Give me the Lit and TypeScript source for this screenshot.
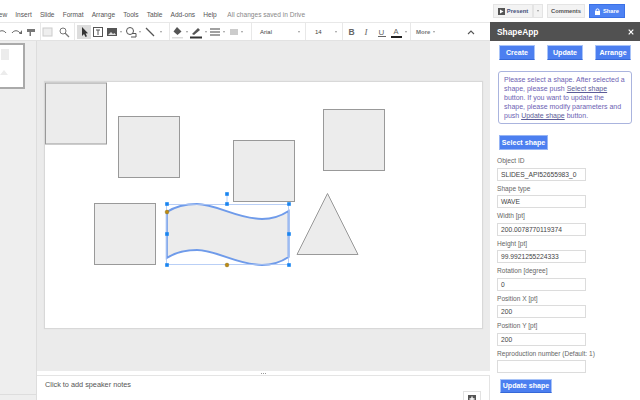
import { LitElement, css, html, svg } from 'lit'
import { customElement } from 'lit/decorators.js'

const menus = ['View', 'Insert', 'Slide', 'Format', 'Arrange', 'Tools', 'Table', 'Add-ons', 'Help']

const fields = [
  ['Object ID', 'SLIDES_API52655983_0'],
  ['Shape type', 'WAVE'],
  ['Width [pt]', '200.0078770119374'],
  ['Height [pt]', '99.9921255224333'],
  ['Rotation [degree]', '0'],
  ['Position X [pt]', '200'],
  ['Position Y [pt]', '200'],
  ['Reproduction number (Default: 1)', ''],
]

const squares = [
  [45.5, 83, 61, 61],
  [118.5, 116.5, 61, 61],
  [233.5, 140.5, 61, 61],
  [323.5, 109.5, 61, 61],
  [94.5, 203.5, 61, 61],
]

const handles = [
  [167, 204], [227, 204], [289, 204],
  [167, 234], [289, 234],
  [167, 265], [289, 265],
]

const ic = (w: number, body: unknown) =>
  html`<svg class="ic" width=${w} height="14" viewBox="0 0 ${w} 14">${body}</svg>`

const caret = html`<i class="caret"></i>`
const sp = (w: number) => html`<span class="sp" style="width:${w}px"></span>`

@customElement('app-root')
export class AppRoot extends LitElement {
  static styles = css`
    :host {
      display: block;
      width: 640px;
      height: 400px;
      overflow: hidden;
      font-family: "Liberation Sans", Arial, sans-serif;
      font-size: 7.5px;
      color: #444;
      background: #fff;
    }

    /* Menu */
    .top {
      height: 22px;
      display: flex;
      align-items: center;
    }
    .menu {
      display: flex;
      gap: 8.1px;
      margin-left: -7px;
      padding-top: 6px;
      font-size: 6.6px;
      color: #555;
    }
    .saved {
      margin-left: 2.5px;
      color: #888;
    }
    .actions {
      margin-left: auto;
      margin-right: 15px;
      display: flex;
      gap: 4px;
    }
    .gbtn {
      height: 14px;
      box-sizing: border-box;
      display: flex;
      align-items: center;
      justify-content: center;
      background: #f3f3f3;
      border: 1px solid #e4e4e4;
      font-size: 5.8px;
      font-weight: bold;
      color: #555;
    }
    .present {
      width: 40px;
      gap: 2px;
      color: #44507a;
    }
    .present-caret {
      width: 10px;
      margin-left: -4px;
    }
    .comments {
      width: 38px;
    }
    .share {
      width: 36px;
      gap: 3px;
      background: #4d82f3;
      border-color: #3b71e6;
      color: #fff;
    }

    /* Arbeitsbereich */
    .body {
      height: 378px;
      display: flex;
    }
    .left {
      width: 490px;
      display: flex;
      flex-direction: column;
    }
    .toolbar {
      height: 19px;
      box-sizing: border-box;
      flex: none;
      display: flex;
      align-items: center;
      border-top: 1px solid #e8e8e8;
      border-bottom: 1px solid #e2e2e2;
    }
    .grp {
      height: 100%;
      box-sizing: border-box;
      flex: none;
      display: flex;
      align-items: center;
      border-right: 1px solid #e8e8e8;
      overflow: hidden;
    }
    .ic,
    .sp {
      flex: none;
      display: block;
    }
    .caret {
      flex: none;
      width: 0;
      height: 0;
      border: 1.5px solid transparent;
      border-top: 2px solid #999;
      border-bottom: 0;
    }
    .active {
      flex: none;
      display: flex;
      align-items: center;
      justify-content: center;
      width: 14px;
      height: 14px;
      background: #ddd;
    }
    .work {
      flex: 1;
      display: flex;
      min-height: 0;
    }
    .strip {
      width: 36px;
      flex: none;
      background: #eee;
      border-right: 1px solid #ddd;
      overflow: hidden;
      position: relative;
    }
    .thumb {
      width: 72px;
      height: 46px;
      box-sizing: border-box;
      margin: 2px 0 0 -47px;
      background: #fff;
      border: 2px solid #aaa;
      display: block;
    }
    .strip-line {
      position: absolute;
      left: 0;
      right: 0;
      bottom: 5px;
      border-top: 1px solid #ddd;
    }
    .center {
      flex: 1;
      display: flex;
      flex-direction: column;
      min-width: 0;
    }
    .canvas {
      height: 330px;
      box-sizing: border-box;
      flex: none;
      background: #ebebeb;
      padding: 41px 0 0 8px;
    }
    .slide {
      display: block;
      width: 437px;
      height: 246px;
      background: #fff;
      box-shadow: 0 0 1px 1px #d8d8d8;
    }
    .grip {
      height: 4px;
      box-sizing: content-box;
      flex: none;
      display: flex;
      align-items: center;
      justify-content: center;
      gap: 1px;
      border-bottom: 1px solid #e4e4e4;
    }
    .grip i {
      width: 1px;
      height: 1px;
      background: #999;
    }
    .notes {
      flex: 1;
      display: flex;
      justify-content: space-between;
      padding: 4px 8px 0 8px;
      font-size: 7.3px;
      color: #555;
      border-right: 1px solid #e4e4e4;
    }
    .plus {
      width: 18px;
      height: 14px;
      margin-top: 11px;
      box-sizing: border-box;
      border: 1px solid #e2e2e2;
      border-bottom: 0;
      display: flex;
      align-items: center;
      justify-content: center;
    }

    /* Seitenleiste */
    .side {
      width: 150px;
      flex: none;
      display: flex;
      flex-direction: column;
    }
    .side-head {
      height: 19px;
      box-sizing: border-box;
      flex: none;
      padding: 0 6px 0 7px;
      display: flex;
      align-items: center;
      justify-content: space-between;
      background: #515151;
      color: #fff;
      font-size: 8.4px;
      font-weight: bold;
    }
    .side-body {
      padding: 4px 0 0 7px;
    }
    .btn {
      height: 15px;
      box-sizing: border-box;
      display: flex;
      align-items: center;
      justify-content: center;
      background: #4c7ff0;
      border: 1px solid #a9c4f8;
      border-bottom-color: #3568d8;
      color: #fff;
      font-size: 7.1px;
      font-weight: bold;
    }
    .btn-row {
      display: flex;
      gap: 12px;
      margin: 0 0 11px 2px;
      width: 132px;
    }
    .btn-row .btn {
      width: 36px;
    }
    .info {
      width: 134px;
      height: 53px;
      margin-left: 1px;
      box-sizing: border-box;
      padding: 3px 2px 3px 5px;
      border: 1px solid #aab4de;
      border-radius: 3px;
      color: #6d62b3;
      font-size: 7px;
      line-height: 9px;
      white-space: nowrap;
    }
    .info u {
      color: #5c5c98;
    }
    .select {
      width: 49px;
      margin: 11px 0 3px 2px;
      height: 15px;
      border-color: #97b5f5;
    }
    .field label {
      display: block;
      height: 14.5px;
      line-height: 15px;
      color: #666;
      font-size: 6.6px;
      white-space: nowrap;
    }
    .value {
      width: 89px;
      height: 13px;
      box-sizing: border-box;
      padding: 0 3px;
      border: 1px solid #dcdcdc;
      background: #fff;
      font-size: 6.7px;
      line-height: 11px;
      color: #444;
    }
    .update {
      width: 52px;
      margin: 6px 0 0 3px;
      height: 14px;
    }
  `

  renderShapes() {
    const top = 'M166.8 212 C176 206 186 204 197 204 C216 204 238 219 262 219 C272 219 281 216 288.6 211'
    const bottom = 'L288.6 257 C281 262 272 265 262 265 C238 265 216 250 197 250 C186 250 176 252 166.8 258 Z'
    return svg`
      ${squares.map(
        ([x, y, w, h]) =>
          svg`<rect x=${x} y=${y} width=${w} height=${h} fill="#ececec" stroke="#999" stroke-width="1"></rect>`
      )}
      <path d="M327.5 193.5 L358 254.5 L297 254.5 Z" fill="#ececec" stroke="#999"></path>
      <path d="${top} ${bottom}" fill="#ececec" stroke="#6f9bea" stroke-width="2"></path>
      <rect x="166.5" y="204.5" width="122" height="60" fill="none" stroke="#a9c4f4" stroke-width="0.8"></rect>
      <line x1="227" y1="194" x2="227" y2="204" stroke="#a9c4f4" stroke-width="0.8"></line>
      <rect x="225.2" y="192.2" width="3.6" height="3.6" fill="#1a85f0"></rect>
      ${handles.map(
        ([x, y]) => svg`<rect x=${x - 1.8} y=${y - 1.8} width="3.6" height="3.6" fill="#1a85f0"></rect>`
      )}
      <circle cx="167" cy="212" r="1.9" fill="#c08a10" stroke="#7a6a20" stroke-width="0.4"></circle>
      <circle cx="227" cy="265" r="1.9" fill="#c08a10" stroke="#7a6a20" stroke-width="0.4"></circle>
    `
  }

  renderToolbar() {
    return html`
      <div class="toolbar">
        <div class="grp" style="width:41px">
          <span style="margin-left:-4px"></span>
          ${ic(13, svg`<path d="M2 8 C4 5 8 5 10 8" fill="none" stroke="#666" stroke-width="1"></path><path d="M1 5 V9 H4" fill="#666"></path>`)}
          ${ic(14, svg`<path d="M3 8 C5 5 9 5 11 8" fill="none" stroke="#666" stroke-width="1"></path><path d="M13 5 V9 H10" fill="#666"></path>`)}
          ${ic(14, svg`<path d="M4 4 H12 V7 H8 V11 H6.5 V7 H4 Z" fill="#777"></path>`)}
        </div>
        <div class="grp" style="width:34px;gap:2px">
          ${ic(14, svg`<rect x="2" y="3" width="9" height="8" fill="#eee" stroke="#ccc"></rect>`)}
          ${ic(14, svg`<circle cx="6" cy="6" r="3" fill="none" stroke="#777"></circle><line x1="8" y1="8" x2="12" y2="12" stroke="#777" stroke-width="1.2"></line>`)}
        </div>
        <div class="grp" style="width:95px;padding-left:2px">
          <span class="active">
            ${ic(10, svg`<path d="M3 2 L3 11 L5 9 L6.5 12 L8 11.3 L6.6 8.5 L9 8.3 Z" fill="#333"></path>`)}
          </span>
          ${ic(14, svg`<rect x="2.5" y="2.5" width="9" height="9" fill="none" stroke="#555"></rect><path d="M5 5 H9 M7 5 V10" stroke="#555"></path>`)}
          ${ic(14, svg`<rect x="2" y="3" width="10" height="8" fill="#555"></rect><path d="M3 10 L6 7 L8 9 L9.5 8 L11 10 Z" fill="#ddd"></path>`)}
          ${sp(1)}${caret}${sp(2)}
          ${ic(14, svg`<circle cx="6" cy="6" r="3.5" fill="none" stroke="#555"></circle><path d="M8 8.5 H12 V12 H7" fill="none" stroke="#555"></path>`)}
          ${sp(1)}${caret}${sp(2)}
          ${ic(14, svg`<line x1="3" y1="3" x2="11" y2="11" stroke="#555" stroke-width="1.3"></line>`)}
          ${sp(2.5)}${caret}
        </div>
        <div class="grp" style="width:82px;padding-left:1px">
          ${ic(14, svg`<path d="M6 2 L10.5 6.5 L6.5 10 L2.5 6.5 Z" fill="#555"></path><rect x="1" y="12" width="11" height="1.5" fill="#ddd"></rect>`)}
          ${sp(0.5)}${caret}${sp(1.5)}
          ${ic(14, svg`<path d="M3 9 L9 3 L11 5 L5 10 Z" fill="#555"></path><rect x="1" y="11.5" width="12" height="2" fill="#333"></rect>`)}
          ${sp(1.5)}${caret}${sp(1.5)}
          ${ic(14, svg`<path d="M2 4 H12 M2 7 H12 M2 10 H12" stroke="#444" stroke-width="1.2"></path>`)}
          ${sp(0.5)}${caret}${sp(2.5)}
          ${ic(14, svg`<rect x="3" y="4" width="8" height="6" fill="#ccc"></rect>`)}
          ${caret}
        </div>
        <div class="grp" style="width:54px;padding-left:8px;justify-content:space-between;padding-right:5px;font-size:6px">
          <span>Arial</span>${caret}
        </div>
        <div class="grp" style="width:37px;padding-left:9px;justify-content:space-between;padding-right:5px;font-size:6px">
          <span>14</span>${caret}
        </div>
        <div class="grp" style="width:68px;padding-left:2px;gap:1px">
          ${ic(14, svg`<text x="3.5" y="10" font-size="8.5" font-weight="bold" fill="#666" font-family="Liberation Sans">B</text>`)}
          ${ic(14, svg`<text x="4.5" y="10" font-size="9" font-style="italic" fill="#666" font-family="Liberation Serif">I</text>`)}
          ${ic(14, svg`<text x="3.5" y="9.5" font-size="8" fill="#666" font-family="Liberation Sans">U</text><rect x="3" y="11" width="8" height="1" fill="#666"></rect>`)}
          ${ic(14, svg`<text x="3.5" y="9" font-size="7.5" fill="#666" font-family="Liberation Sans">A</text><rect x="1" y="11" width="11" height="2" fill="#222"></rect>`)}
          ${caret}
        </div>
        <div class="grp" style="flex:1;border:0;padding-left:5px;gap:3px;font-size:6px;font-weight:bold;color:#777">
          <span>More</span>${caret}
          <svg class="ic" style="margin-left:29px" width="8" height="6" viewBox="0 0 8 6">
            <path d="M1 5 L4 2 L7 5" fill="none" stroke="#555" stroke-width="1.1"></path>
          </svg>
        </div>
      </div>
    `
  }

  render() {
    return html`
      <div class="top">
        <div class="menu">
          ${menus.map((m) => html`<span>${m}</span>`)}
          <span class="saved">All changes saved in Drive</span>
        </div>
        <div class="actions">
          <div class="gbtn present">
            <svg width="7" height="7" viewBox="0 0 7 7"><rect width="7" height="7" fill="#555"></rect><path d="M2 1.5 L5.5 3.5 L2 5.5 Z" fill="#fff"></path></svg>
            Present
          </div>
          <div class="gbtn present-caret">${caret}</div>
          <div class="gbtn comments">Comments</div>
          <div class="gbtn share">
            <svg width="5" height="7" viewBox="0 0 5 7"><rect y="3" width="5" height="4" fill="#fff"></rect><path d="M1 3 V2 C1 0.5 4 0.5 4 2 V3" fill="none" stroke="#fff"></path></svg>
            Share
          </div>
        </div>
      </div>
      <div class="body">
        <div class="left">
          ${this.renderToolbar()}
          <div class="work">
            <div class="strip">
              <svg class="thumb" viewBox="0 0 68 42">
                <rect x="46" y="4" width="8" height="11" fill="#ececec"></rect>
                <path d="M49 25 L53 30 H45 Z" fill="#ececec"></path>
              </svg>
              <div class="strip-line"></div>
            </div>
            <div class="center">
              <div class="canvas">
                <svg class="slide" viewBox="45 82 437 246">${this.renderShapes()}</svg>
              </div>
              <div class="grip"><i></i><i></i><i></i></div>
              <div class="notes">
                <span>Click to add speaker notes</span>
                <span class="plus">
                  <svg width="8" height="8" viewBox="0 0 8 8"><rect width="8" height="8" fill="#555"></rect><path d="M4 1.5 V6.5 M1.5 4 H6.5" stroke="#fff" stroke-width="1.3"></path></svg>
                </span>
              </div>
            </div>
          </div>
        </div>
        <div class="side">
          <div class="side-head">
            <span>ShapeApp</span>
            <svg width="6" height="6" viewBox="0 0 6 6"><path d="M0.7 0.7 L5.3 5.3 M5.3 0.7 L0.7 5.3" stroke="#fff" stroke-width="1.2"></path></svg>
          </div>
          <div class="side-body">
            <div class="btn-row">
              <div class="btn">Create</div>
              <div class="btn">Update</div>
              <div class="btn">Arrange</div>
            </div>
            <div class="info">
              Please select a shape. After selected a<br />
              shape, please push <u>Select shape</u><br />
              button. If you want to update the<br />
              shape, please modify parameters and<br />
              push <u>Update shape</u> button.
            </div>
            <div class="btn select">Select shape</div>
            ${fields.map(
              ([label, value]) => html`
                <div class="field">
                  <label>${label}</label>
                  <div class="value">${value}</div>
                </div>
              `
            )}
            <div class="btn update">Update shape</div>
          </div>
        </div>
      </div>
    `
  }
}
